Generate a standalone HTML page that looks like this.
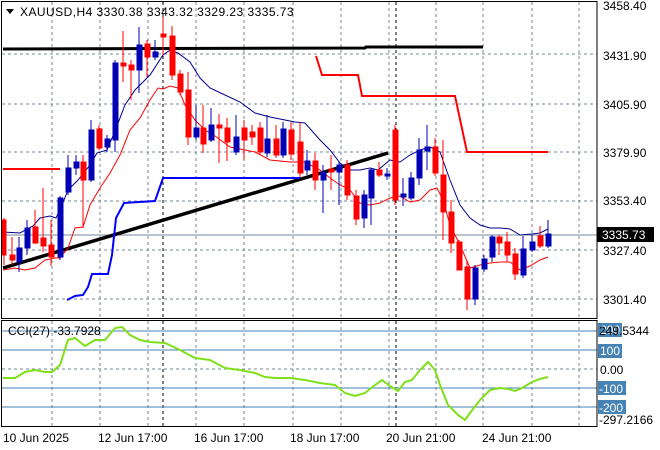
<!DOCTYPE html>
<html><head><meta charset="utf-8"><style>
html,body{margin:0;padding:0;background:#fff;}
svg{display:block;font-family:"Liberation Sans",sans-serif;}
</style></head><body>
<svg width="660" height="450" viewBox="0 0 660 450" xmlns="http://www.w3.org/2000/svg">
<rect width="660" height="450" fill="#fff"/>
<g stroke="#778899" stroke-dasharray="3,3" stroke-width="1">
<line x1="52" y1="2" x2="52" y2="318"/><line x1="100" y1="2" x2="100" y2="318"/><line x1="148" y1="2" x2="148" y2="318"/><line x1="196" y1="2" x2="196" y2="318"/><line x1="244" y1="2" x2="244" y2="318"/><line x1="293" y1="2" x2="293" y2="318"/><line x1="341" y1="2" x2="341" y2="318"/><line x1="389" y1="2" x2="389" y2="318"/><line x1="436" y1="2" x2="436" y2="318"/><line x1="483" y1="2" x2="483" y2="318"/><line x1="532" y1="2" x2="532" y2="318"/><line x1="579" y1="2" x2="579" y2="318"/>
<line x1="52" y1="321" x2="52" y2="426"/><line x1="100" y1="321" x2="100" y2="426"/><line x1="148" y1="321" x2="148" y2="426"/><line x1="196" y1="321" x2="196" y2="426"/><line x1="244" y1="321" x2="244" y2="426"/><line x1="293" y1="321" x2="293" y2="426"/><line x1="341" y1="321" x2="341" y2="426"/><line x1="389" y1="321" x2="389" y2="426"/><line x1="436" y1="321" x2="436" y2="426"/><line x1="483" y1="321" x2="483" y2="426"/><line x1="532" y1="321" x2="532" y2="426"/><line x1="579" y1="321" x2="579" y2="426"/>
<line x1="2" y1="54" x2="597" y2="54"/><line x1="2" y1="104" x2="597" y2="104"/><line x1="2" y1="152" x2="597" y2="152"/><line x1="2" y1="201" x2="597" y2="201"/><line x1="2" y1="250" x2="597" y2="250"/><line x1="2" y1="299" x2="597" y2="299"/>
<line x1="2" y1="369" x2="597" y2="369"/>
</g>
<g stroke="#000" stroke-dasharray="3,3"><line x1="163" y1="2" x2="163" y2="318"/><line x1="396" y1="2" x2="396" y2="318"/><line x1="163" y1="321" x2="163" y2="426"/><line x1="396" y1="321" x2="396" y2="426"/></g>
<line x1="2" y1="235" x2="597" y2="235" stroke="#778899"/>
<g stroke="#4682b4"><line x1="2" y1="331" x2="597" y2="331"/><line x1="2" y1="350" x2="597" y2="350"/><line x1="2" y1="388" x2="597" y2="388"/><line x1="2" y1="407" x2="597" y2="407"/></g>
<polyline points="3,49 365,48 366,47 483,47" fill="none" stroke="#000" stroke-width="3"/>
<line x1="3" y1="268" x2="388" y2="153" stroke="#000" stroke-width="3.5"/>
<polyline points="3,169 60,169" fill="none" stroke="#f00" stroke-width="2"/>
<polyline points="316,56 322,75 358,75 362,96 455,96 467,152 548,152" fill="none" stroke="#f00" stroke-width="2"/>
<polyline points="67,300 75,296 83,295 88,287 92,274 108,274 112,255 116,218 124,203 155,201 163,178 300,178" fill="none" stroke="#0000ff" stroke-width="2"/>
<polyline fill="none" stroke="#00008b" stroke-width="1" points="3,232 20,233 33,226 40,218 50,216 56,218 62,205 68,190 78,180 90,165 97,153 107,150 115,131 125,105 135,90 150,75 163,55 170,50 178,53 190,62 200,78 210,88 225,95 240,102 255,113 270,117 285,120 295,122 305,123 320,140 330,150 340,163 350,170 360,170 370,168 378,170 390,160 400,162 410,155 420,150 430,147 440,152 450,180 460,205 470,218 480,225 490,228 500,228 510,229 520,235 532,234 540,233 548,229"/>
<polyline fill="none" stroke="#f00" stroke-width="1" points="3,270 15,268 25,270 35,268 45,260 55,258 60,258 68,248 75,228 83,227 90,205 100,188 110,173 120,155 130,130 140,118 150,100 158,88 163,89 170,86 178,88 185,105 195,120 205,130 215,136 230,147 245,150 255,152 270,160 290,162 305,162 320,170 330,178 340,185 350,190 360,203 370,205 380,203 390,198 400,196 410,202 420,200 430,190 437,188 443,200 450,225 460,245 470,268 480,265 490,263 500,262 510,262 520,270 530,266 540,260 548,257"/>
<g stroke-width="1">
<g stroke="#f00" fill="#f00">
<line x1="4" y1="218" x2="4" y2="265"/><rect x="2" y="220" width="4" height="35"/>
<line x1="12" y1="237" x2="12" y2="265"/><rect x="10" y="255" width="5" height="5"/>
<line x1="35" y1="210" x2="35" y2="244"/><rect x="33" y="227" width="5" height="16"/>
<line x1="43" y1="188" x2="43" y2="252"/><rect x="41" y="238" width="5" height="8"/>
<line x1="51" y1="220" x2="51" y2="266"/><rect x="49" y="245" width="5" height="12"/>
<line x1="83" y1="155" x2="83" y2="228"/><rect x="81" y="162" width="5" height="18"/>
<line x1="99" y1="125" x2="99" y2="150"/><rect x="97" y="129" width="5" height="19"/>
<line x1="123" y1="31" x2="123" y2="82"/><rect x="121" y="63" width="5" height="3"/>
<line x1="131" y1="60" x2="131" y2="100"/><rect x="129" y="65" width="5" height="5"/>
<line x1="147" y1="40" x2="147" y2="77"/><rect x="145" y="44" width="5" height="13"/>
<line x1="163" y1="17" x2="163" y2="55"/><rect x="161" y="34" width="5" height="3"/>
<line x1="172" y1="26" x2="172" y2="80"/><rect x="170" y="36" width="5" height="39"/>
<line x1="180" y1="70" x2="180" y2="95"/><rect x="178" y="74" width="5" height="18"/>
<line x1="188" y1="72" x2="188" y2="145"/><rect x="186" y="90" width="5" height="47"/>
<line x1="203" y1="105" x2="203" y2="153"/><rect x="201" y="128" width="5" height="16"/>
<line x1="219" y1="114" x2="219" y2="163"/><rect x="217" y="125" width="5" height="3"/>
<line x1="227" y1="118" x2="227" y2="161"/><rect x="225" y="128" width="5" height="14"/>
<line x1="244" y1="120" x2="244" y2="160"/><rect x="242" y="128" width="5" height="12"/>
<line x1="252" y1="125" x2="252" y2="145"/><rect x="250" y="132" width="5" height="5"/>
<line x1="260" y1="122" x2="260" y2="155"/><rect x="258" y="128" width="5" height="24"/>
<line x1="276" y1="125" x2="276" y2="158"/><rect x="274" y="139" width="5" height="16"/>
<line x1="291" y1="122" x2="291" y2="160"/><rect x="289" y="130" width="5" height="24"/>
<line x1="300" y1="122" x2="300" y2="177"/><rect x="298" y="142" width="5" height="31"/>
<line x1="315" y1="153" x2="315" y2="190"/><rect x="313" y="161" width="5" height="19"/>
<line x1="331" y1="155" x2="331" y2="190"/><rect x="329" y="169" width="5" height="3"/>
<line x1="347" y1="160" x2="347" y2="200"/><rect x="345" y="165" width="5" height="30"/>
<line x1="356" y1="190" x2="356" y2="225"/><rect x="354" y="196" width="5" height="23"/>
<line x1="379" y1="162" x2="379" y2="177"/><rect x="377" y="170" width="5" height="5"/>
<line x1="395" y1="125" x2="395" y2="205"/><rect x="393" y="130" width="5" height="70"/>
<line x1="435" y1="138" x2="435" y2="176"/><rect x="433" y="147" width="5" height="26"/>
<line x1="443" y1="140" x2="443" y2="240"/><rect x="441" y="175" width="5" height="37"/>
<line x1="451" y1="200" x2="451" y2="253"/><rect x="449" y="212" width="5" height="31"/>
<line x1="459" y1="240" x2="459" y2="270"/><rect x="457" y="242" width="5" height="28"/>
<line x1="467" y1="260" x2="467" y2="310"/><rect x="465" y="267" width="5" height="32"/>
<line x1="499" y1="235" x2="499" y2="255"/><rect x="497" y="237" width="5" height="6"/>
<line x1="507" y1="232" x2="507" y2="262"/><rect x="505" y="242" width="5" height="13"/>
<line x1="515" y1="248" x2="515" y2="280"/><rect x="513" y="254" width="5" height="20"/>
<line x1="540" y1="226" x2="540" y2="248"/><rect x="538" y="236" width="5" height="10"/>
</g>
<g stroke="#0000b4" fill="#0000b4">
<line x1="19" y1="237" x2="19" y2="272"/><rect x="17" y="248" width="5" height="14"/>
<line x1="27" y1="220" x2="27" y2="255"/><rect x="25" y="228" width="5" height="20"/>
<line x1="60" y1="196" x2="60" y2="260"/><rect x="58" y="198" width="5" height="59"/>
<line x1="68" y1="155" x2="68" y2="195"/><rect x="66" y="168" width="5" height="24"/>
<line x1="76" y1="155" x2="76" y2="175"/><rect x="74" y="162" width="5" height="6"/>
<line x1="91" y1="120" x2="91" y2="182"/><rect x="89" y="130" width="5" height="50"/>
<line x1="107" y1="135" x2="107" y2="152"/><rect x="105" y="139" width="5" height="8"/>
<line x1="115" y1="60" x2="115" y2="152"/><rect x="113" y="63" width="5" height="77"/>
<line x1="139" y1="27" x2="139" y2="93"/><rect x="137" y="45" width="5" height="25"/>
<line x1="155" y1="40" x2="155" y2="60"/><rect x="153" y="52" width="5" height="5"/>
<line x1="196" y1="105" x2="196" y2="140"/><rect x="194" y="128" width="5" height="9"/>
<line x1="211" y1="108" x2="211" y2="142"/><rect x="209" y="125" width="5" height="15"/>
<line x1="236" y1="115" x2="236" y2="155"/><rect x="234" y="137" width="5" height="15"/>
<line x1="267" y1="115" x2="267" y2="157"/><rect x="265" y="139" width="5" height="14"/>
<line x1="283" y1="122" x2="283" y2="158"/><rect x="281" y="129" width="5" height="26"/>
<line x1="307" y1="150" x2="307" y2="175"/><rect x="305" y="161" width="5" height="9"/>
<line x1="323" y1="165" x2="323" y2="213"/><rect x="321" y="172" width="5" height="8"/>
<line x1="339" y1="162" x2="339" y2="205"/><rect x="337" y="165" width="5" height="7"/>
<line x1="364" y1="190" x2="364" y2="228"/><rect x="362" y="195" width="5" height="23"/>
<line x1="371" y1="168" x2="371" y2="225"/><rect x="369" y="170" width="5" height="28"/>
<line x1="387" y1="168" x2="387" y2="180"/><rect x="385" y="174" width="5" height="2"/>
<line x1="403" y1="178" x2="403" y2="206"/><rect x="401" y="194" width="5" height="3"/>
<line x1="411" y1="172" x2="411" y2="200"/><rect x="409" y="178" width="5" height="20"/>
<line x1="419" y1="138" x2="419" y2="185"/><rect x="417" y="150" width="5" height="28"/>
<line x1="427" y1="125" x2="427" y2="170"/><rect x="425" y="147" width="5" height="4"/>
<line x1="475" y1="265" x2="475" y2="305"/><rect x="473" y="268" width="5" height="31"/>
<line x1="484" y1="255" x2="484" y2="272"/><rect x="482" y="259" width="5" height="10"/>
<line x1="492" y1="235" x2="492" y2="262"/><rect x="490" y="237" width="5" height="20"/>
<line x1="523" y1="236" x2="523" y2="278"/><rect x="521" y="249" width="5" height="26"/>
<line x1="532" y1="235" x2="532" y2="252"/><rect x="530" y="242" width="5" height="8"/>
<line x1="548" y1="220" x2="548" y2="248"/><rect x="546" y="234" width="5" height="12"/>
</g>
</g>
<polyline fill="none" stroke="#7fe01a" stroke-width="2" points="3,378 15,378 25,372 35,370 45,372 52,372 60,365 68,340 75,338 85,346 95,340 105,340 115,328 122,327 130,335 140,340 150,342 165,343 180,350 195,358 210,360 225,368 240,370 255,373 265,377 275,378 290,378 305,380 320,383 335,385 345,393 355,396 365,393 375,385 382,380 390,386 398,391 405,382 412,380 420,370 428,362 435,370 440,385 448,405 458,415 465,420 470,413 480,400 490,390 500,388 508,389 515,391 522,388 532,382 540,379 548,377"/>
<rect x="1.5" y="1.5" width="595.5" height="317" fill="none" stroke="#000"/>
<rect x="1.5" y="320.5" width="595.5" height="106" fill="none" stroke="#000"/>
<g fill="#000" font-size="12">
<path d="M6,9 L14,9 L10,14 Z"/>
<text x="20" y="16" letter-spacing="0.45">XAUUSD,H4  3330.38 3343.32 3329.23 3335.73</text>
<text x="8" y="335">CCI(27) -33.7928</text>
<text x="603" y="10">3458.40</text><text x="603" y="60">3431.90</text><text x="603" y="109">3405.90</text><text x="603" y="157">3379.90</text><text x="603" y="205">3353.40</text><text x="603" y="255">3327.40</text><text x="603" y="304">3301.40</text>
</g>
<rect x="597" y="227" width="57" height="15" fill="#000"/>
<text x="602" y="239" fill="#fff" font-size="12">3335.73</text>
<g fill="#4682b4"><rect x="598" y="323" width="24" height="14"/><rect x="598" y="344" width="24" height="14"/><rect x="598" y="381" width="28" height="14"/><rect x="598" y="400" width="28" height="14"/></g>
<g font-size="12">
<text x="600" y="334" fill="#fff">200</text>
<text x="599" y="335" fill="#000">249.5344</text>
<text x="600" y="355" fill="#fff">100</text>
<text x="600" y="374" fill="#000">0.00</text>
<text x="599" y="393" fill="#fff">-100</text>
<text x="599" y="412" fill="#fff">-200</text>
<text x="599" y="424" fill="#000">-297.2166</text>
</g>
<g fill="#000" font-size="12">
<text x="3" y="442">10 Jun 2025</text>
<text x="98" y="442">12 Jun 17:00</text>
<text x="194" y="442">16 Jun 17:00</text>
<text x="290" y="442">18 Jun 17:00</text>
<text x="386" y="442">20 Jun 21:00</text>
<text x="482" y="442">24 Jun 21:00</text>
</g>
</svg>
</body></html>
